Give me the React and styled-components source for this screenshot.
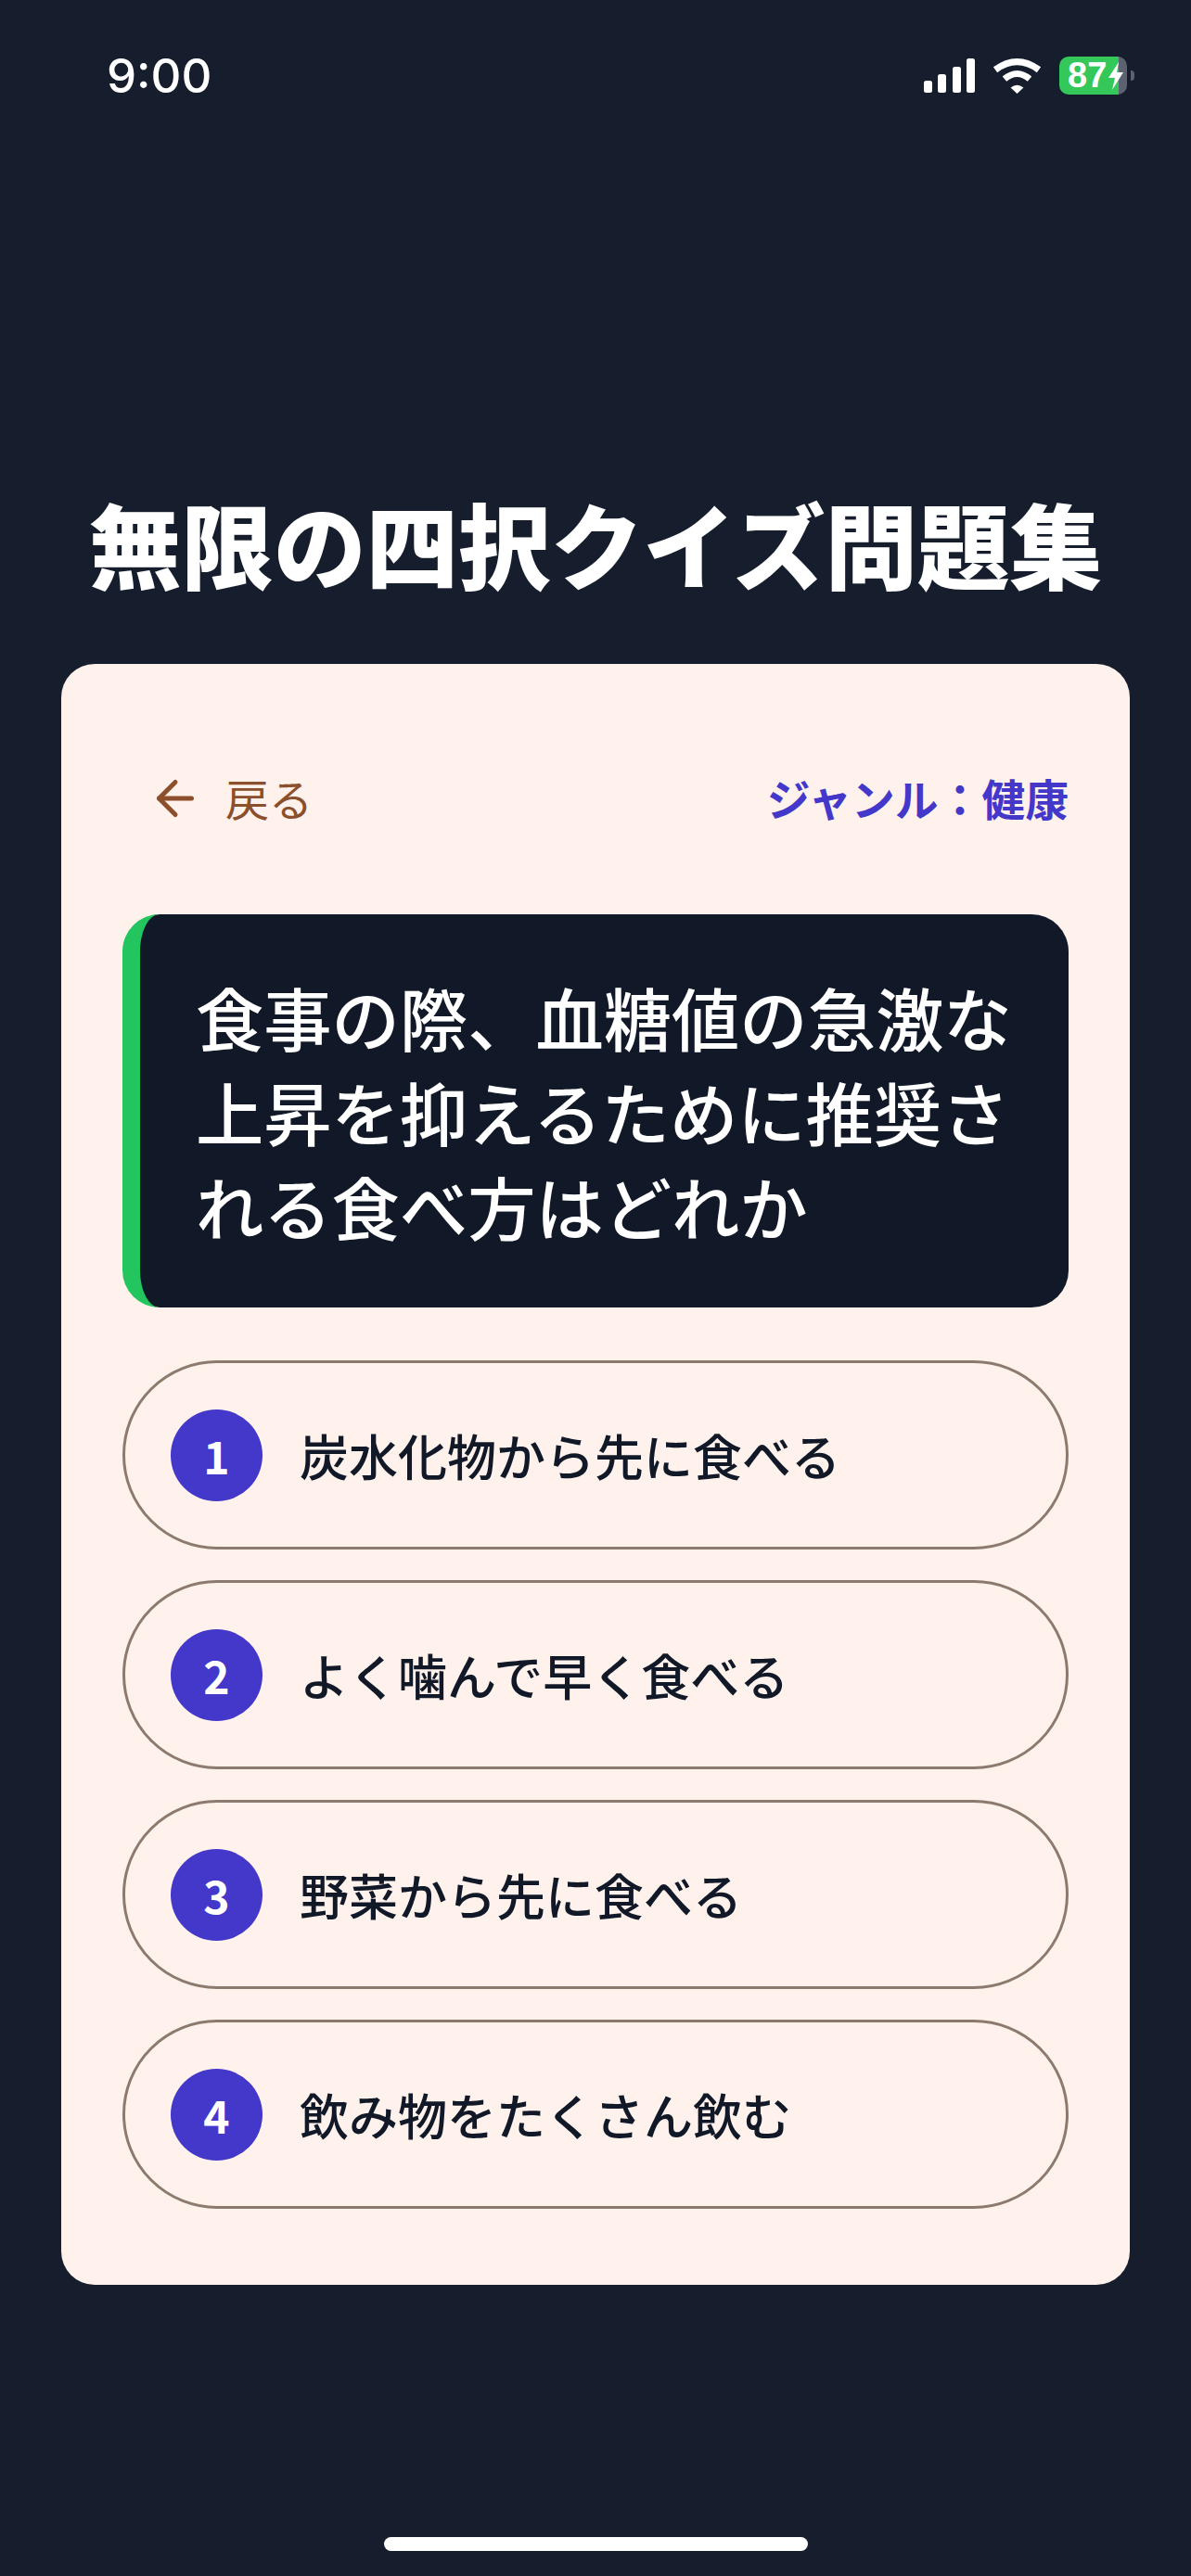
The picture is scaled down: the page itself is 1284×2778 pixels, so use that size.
import React from "react";
import styled, { createGlobalStyle } from "styled-components";
import { ArrowLeft } from "lucide-react";

const GlobalStyle = createGlobalStyle`
  html, body {
    margin: 0;
    padding: 0;
    background: #161e2e;
  }
  * {
    box-sizing: border-box;
  }
`;

const Page = styled.div`
  display: flex;
  flex-direction: column;
  width: 1284px;
  height: 2778px;
  background: #161e2e;
  font-family: "Noto Sans CJK JP", "Noto Sans", sans-serif;
`;

const StatusBar = styled.div`
  display: flex;
  justify-content: space-between;
  align-items: center;
  height: 162px;
  padding: 0 69px 0 115px;
`;

const Time = styled.span`
  font-family: Inter, "Liberation Sans", sans-serif;
  font-size: 51px;
  font-weight: 500;
  color: #ffffff;
`;

const StatusIcons = styled.div`
  display: flex;
  align-items: center;
  gap: 19px;
`;

const Battery = styled.div`
  position: relative;
  display: flex;
  align-items: center;
  width: 73px;
  height: 41px;
  padding-left: 9px;
  border-radius: 10px;
  background: linear-gradient(to right, #34c759 64px, #5d6270 64px);
  font-family: "Liberation Sans", sans-serif;
  font-size: 38px;
  font-weight: 700;
  color: #ffffff;
  &::after {
    content: "";
    position: absolute;
    right: -8px;
    top: 15px;
    width: 4px;
    height: 11px;
    border-radius: 0 4px 4px 0;
    background: #5d6270;
  }
`;

const Bolt = styled.svg`
  position: absolute;
  left: 53px;
  top: 6px;
`;

const Title = styled.h1`
  margin: 0;
  padding-top: 354px;
  font-size: 99.6px;
  font-weight: 900;
  line-height: 138px;
  text-align: center;
  color: #ffffff;
`;

const Card = styled.div`
  display: flex;
  flex-direction: column;
  margin: 62px 66px 0;
  padding: 66px 66px 82px;
  border-radius: 36px;
  background: #fff1eb;
`;

const TopRow = styled.div`
  display: flex;
  justify-content: space-between;
  align-items: center;
  height: 158px;
  margin-bottom: 46px;
`;

const BackButton = styled.div`
  display: flex;
  align-items: center;
  gap: 24px;
  padding-left: 27px;
  color: #8b4f2b;
`;

const BackLabel = styled.span`
  padding-bottom: 3px;
  font-size: 47px;
`;

const Genre = styled.span`
  padding-bottom: 3px;
  font-size: 46.8px;
  font-weight: 700;
  color: #4338ca;
`;

const Question = styled.div`
  padding: 59px 60px;
  border-left: 19px solid #22c55e;
  border-radius: 40px;
  background: #111827;
  font-size: 73.3px;
  font-weight: 500;
  line-height: 102px;
  color: #ffffff;
`;

const Options = styled.div`
  display: flex;
  flex-direction: column;
  gap: 33px;
  margin-top: 57px;
`;

const Option = styled.div`
  display: flex;
  align-items: center;
  gap: 40px;
  height: 204px;
  padding-left: 49px;
  border: 3px solid #8c7a6e;
  border-radius: 102px;
  font-size: 53px;
  font-weight: 500;
  color: #111827;
`;

const Badge = styled.span`
  display: flex;
  justify-content: center;
  align-items: center;
  flex: none;
  width: 99px;
  height: 99px;
  border-radius: 50%;
  background: #4338ca;
  font-size: 48px;
  font-weight: 700;
  color: #ffffff;
`;

const HomeBar = styled.div`
  width: 457px;
  height: 15px;
  margin: auto auto 27px;
  border-radius: 8px;
  background: #ffffff;
`;

const choices = [
  "炭水化物から先に食べる",
  "よく噛んで早く食べる",
  "野菜から先に食べる",
  "飲み物をたくさん飲む",
];

function SignalIcon() {
  return (
    <svg width="55" height="37" viewBox="0 0 55 37" fill="#fff">
      <rect x="0" y="24" width="9" height="13" rx="2.5" />
      <rect x="15" y="17" width="9" height="20" rx="2.5" />
      <rect x="31" y="9" width="9" height="28" rx="2.5" />
      <rect x="46" y="0" width="9" height="37" rx="2.5" />
    </svg>
  );
}

function WifiIcon() {
  return (
    <svg width="53" height="39" viewBox="0 0 158 118">
      <path d="M8 40Q79 -12 150 40" fill="none" stroke="#fff" strokeWidth="22" />
      <path d="M38 70Q79 36 120 70" fill="none" stroke="#fff" strokeWidth="21" />
      <path d="M58 98Q79 82 100 98L79 118Z" fill="#fff" />
    </svg>
  );
}

export default function App() {
  return (
    <Page>
      <GlobalStyle />
      <StatusBar>
        <Time>9:00</Time>
        <StatusIcons>
          <SignalIcon />
          <WifiIcon />
          <Battery>
            87
            <Bolt width="16" height="30" viewBox="0 0 16 30" fill="#fff">
              <path d="M11 0L0 17H7L4 30L16 11H9Z" />
            </Bolt>
          </Battery>
        </StatusIcons>
      </StatusBar>
      <Title>無限の四択クイズ問題集</Title>
      <Card>
        <TopRow>
          <BackButton>
            <ArrowLeft size={60} strokeWidth={2} />
            <BackLabel>戻る</BackLabel>
          </BackButton>
          <Genre>ジャンル：健康</Genre>
        </TopRow>
        <Question>食事の際、血糖値の急激な上昇を抑えるために推奨される食べ方はどれか</Question>
        <Options>
          {choices.map((text, i) => (
            <Option key={text}>
              <Badge>{i + 1}</Badge>
              {text}
            </Option>
          ))}
        </Options>
      </Card>
      <HomeBar />
    </Page>
  );
}
